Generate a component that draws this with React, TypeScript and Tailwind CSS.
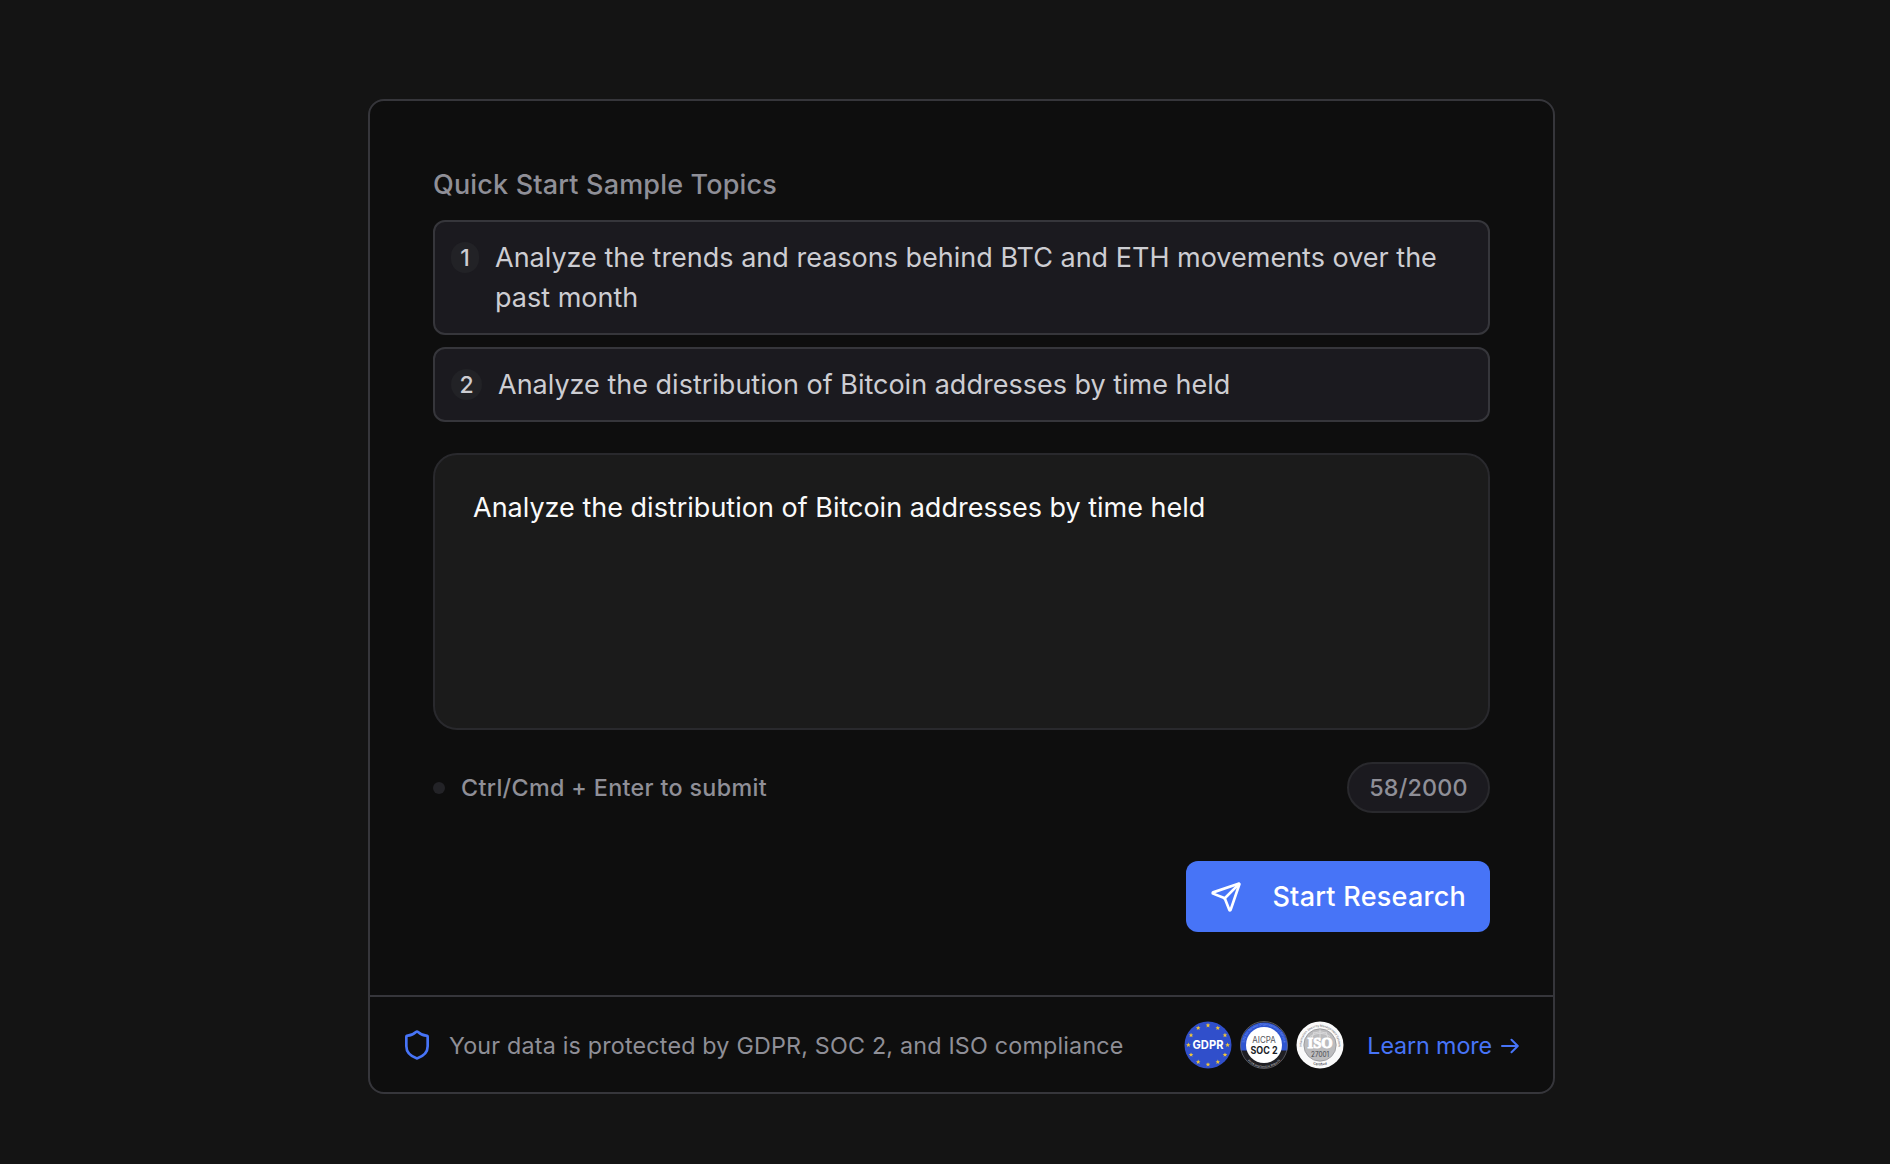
import { useState } from 'react'
import { Send, Shield } from 'lucide-react'

const TOPICS = [
  'Analyze the trends and reasons behind BTC and ETH movements over the past month',
  'Analyze the distribution of Bitcoin addresses by time held',
]

const MAX_LENGTH = 2000

function GdprBadge() {
  const stars = Array.from({ length: 12 }, (_, i) => {
    const a = (i * Math.PI) / 6
    return { x: 24 + 19.6 * Math.sin(a), y: 24 - 19.6 * Math.cos(a) }
  })
  return (
    <svg viewBox="0 0 48 48" className="size-12 shrink-0">
      <circle cx="24" cy="24" r="23.5" fill="#304fcb" />
      {stars.map((s, i) => (
        <path
          key={i}
          transform={`translate(${s.x} ${s.y})`}
          d="M0-2.4.7-.8 2.3-.8 1 .4 1.5 2 0 1-1.5 2-1 .4-2.3-.8-.7-.8Z"
          fill="#f0c63a"
        />
      ))}
      <text x="24" y="28.4" textAnchor="middle" textLength="31" lengthAdjust="spacingAndGlyphs" fontFamily="Inter, sans-serif" fontSize="12.2" fontWeight="700" fill="#fff">GDPR</text>
    </svg>
  )
}

function SocBadge() {
  return (
    <svg viewBox="0 0 48 48" className="size-12 shrink-0">
      <circle cx="24" cy="24" r="23.5" fill="#1f1f23" />
      <path d="M.8 29.5A23.6 23.6 0 1 1 47.2 29.5Z" fill="#2f55d0" />
      <circle cx="24" cy="24" r="23.5" fill="none" stroke="#7e8088" strokeWidth=".6" />
      <path id="soc-top" d="M4.2 24A19.8 19.8 0 0 1 43.8 24" fill="none" />
      <path id="soc-bottom" d="M2.3 25A21.7 21.7 0 0 0 45.7 25" fill="none" />
      <text fontFamily="Inter, sans-serif" fontSize="3" fill="#7d9cf2">
        <textPath href="#soc-top" startOffset="50%" textAnchor="middle">SOC for Service Organizations | Service</textPath>
      </text>
      <text fontFamily="Inter, sans-serif" fontSize="3" fill="#c9c9cc">
        <textPath href="#soc-bottom" startOffset="50%" textAnchor="middle">aicpa.org/soc4so Reports</textPath>
      </text>
      <circle cx="24" cy="24" r="18" fill="#fff" />
      <text x="24" y="21.8" textAnchor="middle" textLength="23.5" lengthAdjust="spacingAndGlyphs" fontFamily="Inter, sans-serif" fontSize="9" fill="#55565c">AICPA</text>
      <text x="24" y="33.2" textAnchor="middle" textLength="27" lengthAdjust="spacingAndGlyphs" fontFamily="Inter, sans-serif" fontSize="9.8" fontWeight="700" fill="#202126">SOC 2</text>
    </svg>
  )
}

function IsoBadge() {
  return (
    <svg viewBox="0 0 48 48" className="size-12 shrink-0">
      <circle cx="24" cy="24" r="23.5" fill="#fafafa" />
      <path id="iso-top" d="M6 28A18.4 18.4 0 1 1 42 28" fill="none" />
      <path id="iso-bottom" d="M3.5 24A20.5 20.5 0 0 0 44.5 24" fill="none" />
      <text fontFamily="Inter, sans-serif" fontSize="3" fill="#55565c">
        <textPath href="#iso-top" startOffset="50%" textAnchor="middle">Information Security Management System</textPath>
      </text>
      <text fontFamily="Inter, sans-serif" fontSize="3.4" fontWeight="600" fill="#3c3d42">
        <textPath href="#iso-bottom" startOffset="50%" textAnchor="middle">Certified</textPath>
      </text>
      <circle cx="24" cy="24" r="16.2" fill="#bcbcbe" stroke="#8d8d90" strokeWidth=".7" />
      <path d="M14 15.5Q24 9 34 15.5M18 12Q24 9.5 30 12M24 8.5V17M18 11 16 17M30 11 32 17" fill="none" stroke="#dedee0" strokeWidth=".8" />
      <text x="24" y="27.3" textAnchor="middle" textLength="25" lengthAdjust="spacingAndGlyphs" fontFamily="Liberation Serif, serif" fontSize="14" fontWeight="700" fill="#fff" stroke="#fff" strokeWidth=".9">ISO</text>
      <text x="24" y="35.8" textAnchor="middle" textLength="18" lengthAdjust="spacingAndGlyphs" fontFamily="Inter, sans-serif" fontSize="7" fill="#45464b">27001</text>
    </svg>
  )
}

export default function App() {
  const [query, setQuery] = useState(TOPICS[1])

  return (
    <div className="h-screen overflow-hidden bg-[#141414] pt-[99px] pl-[368px] font-['Inter',sans-serif]">
      <div className="flex h-[995px] w-[1187px] flex-col rounded-2xl border-2 border-[#36363b] bg-[#0e0e0e]">
        <div className="flex flex-1 flex-col px-[63px] pt-[65px]">
          <h2 className="text-[27px] leading-[38px] font-medium tracking-[0.17px] text-[#8f8f97]">Quick Start Sample Topics</h2>

          <div className="mt-4 flex flex-col gap-3">
            {TOPICS.map((topic, i) => (
              <button
                key={topic}
                onClick={() => setQuery(topic)}
                className={`flex items-start gap-4 rounded-xl border-2 border-[#36363b] bg-[#1b1a1f] px-4 pt-4 text-left text-[27px] leading-10 text-[#cdcdd2] ${i === 0 ? 'h-[115px]' : 'h-[75px]'}`}
              >
                <span className={`mt-1 flex h-[31px] items-center justify-center rounded-full bg-[#222226] text-[23px] font-medium ${i === 0 ? 'w-7 shrink-0' : 'w-[31px]'}`}>
                  {i + 1}
                </span>
                <span>{topic}</span>
              </button>
            ))}
          </div>

          <textarea
            value={query}
            onChange={e => setQuery(e.target.value)}
            maxLength={MAX_LENGTH}
            spellCheck={false}
            className="mt-[31px] h-[277px] resize-none rounded-3xl border-2 border-[#29292d] bg-[#1b1b1b] px-[38px] py-[33px] text-[27px] leading-10 text-[#fafafa] outline-none"
          />

          <div className="mt-8 flex items-center justify-between text-[23.3px] font-medium text-[#8f8f97]">
            <div className="flex items-center gap-4">
              <span className="size-3 rounded-full bg-[#232327]" />
              <span className="pt-px tracking-[0.34px]">Ctrl/Cmd + Enter to submit</span>
            </div>
            <span className="flex h-[51px] w-[143px] items-center justify-center rounded-full border-2 border-[#29292d] bg-[#1b1a1f] pt-px tracking-[0.2px]">
              {query.length}/{MAX_LENGTH}
            </span>
          </div>

          <button className="mt-12 flex h-[71px] w-[304px] items-center justify-between self-end rounded-xl bg-[#4774f7] px-6 text-[27px] font-medium tracking-[0.25px] whitespace-nowrap text-white">
            <Send className="size-8" strokeWidth={2} />
            <span className="pt-0.5">Start Research</span>
          </button>
        </div>

        <div className="flex h-[97px] items-center border-t-2 border-[#36363b] pr-[34px] pl-[31px]">
          <Shield className="size-8 text-[#4774f7]" strokeWidth={2} />
          <span className="ml-4 pt-[3px] text-[23.3px] tracking-[0.19px] whitespace-nowrap text-[#8f8f97]">
            Your data is protected by GDPR, SOC 2, and ISO compliance
          </span>
          <div className="ml-auto flex gap-2">
            <GdprBadge />
            <SocBadge />
            <IsoBadge />
          </div>
          <a href="#" className="ml-[23px] flex items-center gap-[9px] pt-[3px] text-[23.3px] tracking-[-0.12px] whitespace-nowrap text-[#4774f7]">
            Learn more
            <svg viewBox="0 0 18 16" className="h-4 w-[18px]" fill="none" stroke="currentColor" strokeWidth="2" strokeLinecap="round" strokeLinejoin="round">
              <path d="M1 8H16.5M10.5 1.8 16.8 8 10.5 14.2" />
            </svg>
          </a>
        </div>
      </div>
    </div>
  )
}
